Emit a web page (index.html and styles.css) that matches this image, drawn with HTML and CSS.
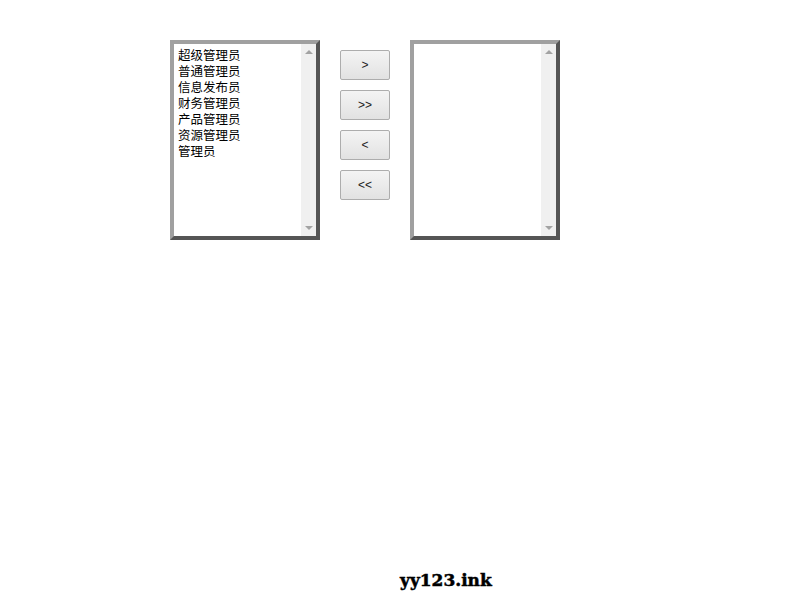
FILE: index.html
```html
<!DOCTYPE html>
<html lang="zh-CN">
<head>
<meta charset="utf-8">
<title>穿梭框</title>
<link rel="stylesheet" href="styles.css">
</head>
<body>
<div class="page">
  <div class="transfer">
    <div class="listbox">
      <div class="options">
        <div class="opt">超级管理员</div>
        <div class="opt">普通管理员</div>
        <div class="opt">信息发布员</div>
        <div class="opt">财务管理员</div>
        <div class="opt">产品管理员</div>
        <div class="opt">资源管理员</div>
        <div class="opt">管理员</div>
      </div>
      <div class="scrollbar">
        <span class="arrow arrow-up"></span>
        <span class="arrow arrow-down"></span>
      </div>
    </div>
    <div class="actions">
      <button class="btn" type="button">&gt;</button>
      <button class="btn" type="button">&gt;&gt;</button>
      <button class="btn" type="button">&lt;</button>
      <button class="btn" type="button">&lt;&lt;</button>
    </div>
    <div class="listbox">
      <div class="options"></div>
      <div class="scrollbar">
        <span class="arrow arrow-up"></span>
        <span class="arrow arrow-down"></span>
      </div>
    </div>
  </div>
  <div class="footer">yy123.ink</div>
</div>
</body>
</html>
```

FILE: styles.css
```css
html, body {
  margin: 0;
  padding: 0;
  background: #fff;
}

.page {
  display: flex;
  flex-direction: column;
  min-height: 600px;
  box-sizing: border-box;
}

.transfer {
  display: flex;
  align-items: flex-start;
  gap: 20px;
  padding: 40px 0 0 170px;
}

.listbox {
  display: flex;
  width: 150px;
  height: 200px;
  box-sizing: border-box;
  border: 4px solid;
  border-color: #a0a0a0 #555555 #555555 #a0a0a0;
  background: #fff;
  overflow: hidden;
}

.options {
  flex: 1;
  padding: 3px 0 0 4px;
  font-family: "Noto Sans CJK SC", "Liberation Sans", sans-serif;
  font-size: 12.5px;
  color: #000;
}

.opt {
  line-height: 16px;
  height: 16px;
  white-space: nowrap;
}

.scrollbar {
  width: 15px;
  flex: none;
  background: #f0f0f0;
  display: flex;
  flex-direction: column;
  justify-content: space-between;
  align-items: center;
  padding: 6px 0 6px;
  box-sizing: border-box;
}

.arrow {
  width: 0;
  height: 0;
  border-left: 4px solid transparent;
  border-right: 4px solid transparent;
}

.arrow-up {
  border-bottom: 4px solid #a3a3a3;
}

.arrow-down {
  border-top: 4px solid #a3a3a3;
}

.actions {
  display: flex;
  flex-direction: column;
  gap: 10px;
  padding-top: 10px;
}

.btn {
  width: 50px;
  height: 30px;
  margin: 0;
  padding: 0;
  box-sizing: border-box;
  border: 1px solid #adadad;
  border-radius: 2px;
  background: linear-gradient(#f4f4f4, #e2e2e2);
  font-family: "Liberation Sans", Arial, sans-serif;
  font-size: 12px;
  color: #222;
}

.footer {
  margin-top: auto;
  padding: 0 0 10px 400px;
  font-family: "DejaVu Serif", serif;
  font-weight: bold;
  font-size: 17px;
  line-height: 20px;
  color: #000;
  -webkit-text-stroke: 0.5px #000;
}
```
